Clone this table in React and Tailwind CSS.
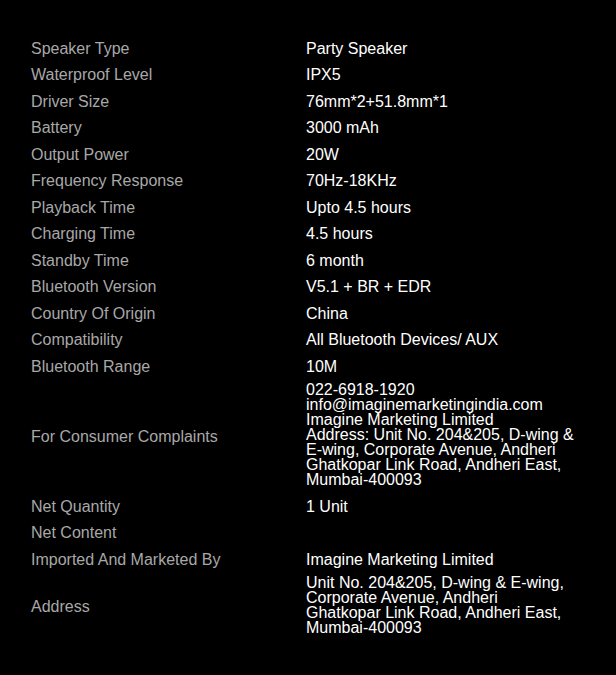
const SPECS = [
  ["Speaker Type", "Party Speaker"],
  ["Waterproof Level", "IPX5"],
  ["Driver Size", "76mm*2+51.8mm*1"],
  ["Battery", "3000 mAh"],
  ["Output Power", "20W"],
  ["Frequency Response", "70Hz-18KHz"],
  ["Playback Time", "Upto 4.5 hours"],
  ["Charging Time", "4.5 hours"],
  ["Standby Time", "6 month"],
  ["Bluetooth Version", "V5.1 + BR + EDR"],
  ["Country Of Origin", "China"],
  ["Compatibility", "All Bluetooth Devices/ AUX"],
  ["Bluetooth Range", "10M"],
  [
    "For Consumer Complaints",
    [
      "022-6918-1920",
      "info@imaginemarketingindia.com",
      "Imagine Marketing Limited",
      "Address: Unit No. 204&205, D-wing &",
      "E-wing, Corporate Avenue, Andheri",
      "Ghatkopar Link Road, Andheri East,",
      "Mumbai-400093",
    ],
  ],
  ["Net Quantity", "1 Unit"],
  ["Net Content", ""],
  ["Imported And Marketed By", "Imagine Marketing Limited"],
  [
    "Address",
    [
      "Unit No. 204&205, D-wing & E-wing,",
      "Corporate Avenue, Andheri",
      "Ghatkopar Link Road, Andheri East,",
      "Mumbai-400093",
    ],
  ],
];

function SpecRow({ label, value }) {
  const multi = Array.isArray(value);
  return (
    <div className="grid grid-cols-[275px_1fr] items-center">
      <div className="py-[5.75px] leading-[15px] text-[#a8a8a8]">{label}</div>
      {multi ? (
        <div className="pt-[2px] pb-[6.5px] leading-[15px] text-white">
          {value.map((line) => (
            <div key={line}>{line}</div>
          ))}
        </div>
      ) : (
        <div className="py-[5.75px] leading-[15px] min-h-[26.5px] text-white">
          {value}
        </div>
      )}
    </div>
  );
}

export default function App() {
  return (
    <div
      className="w-[616px] h-[675px] bg-black pl-[31px] pr-[20px] pt-[35px] text-[16px]"
      style={{ fontFamily: '"Liberation Sans", Arial, sans-serif' }}
    >
      {SPECS.map(([label, value]) => (
        <SpecRow key={label} label={label} value={value} />
      ))}
    </div>
  );
}
